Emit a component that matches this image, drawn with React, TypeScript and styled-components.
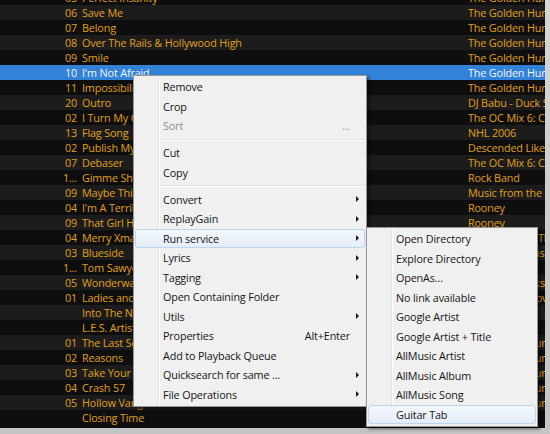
import styled, { createGlobalStyle } from "styled-components";

const GlobalStyle = createGlobalStyle`
  html, body {
    margin: 0;
    padding: 0;
    background: #000;
  }
  body {
    font-family: "Open Sans", "Noto Sans", sans-serif;
  }
`;

const Window = styled.div`
  position: relative;
  width: 550px;
  height: 434px;
  display: grid;
  grid-template-columns: 545px 5px;
  grid-template-rows: 428px 6px;
  background: linear-gradient(180deg, #d6d6d6, #c4c4c4);
  overflow: hidden;
`;

const Playlist = styled.div`
  background: #0e0e0e;
  overflow: hidden;
`;

const Rows = styled.div`
  margin-top: -10px;
`;

const Row = styled.div<{ $alt: boolean; $selected?: boolean }>`
  display: grid;
  grid-template-columns: 77px 381px 1fr;
  column-gap: 5px;
  height: 15px;
  line-height: 15px;
  font-size: 10.8px;
  font-weight: 500;
  letter-spacing: -0.15px;
  white-space: nowrap;
  color: ${({ $selected }) => ($selected ? "#f2f6fc" : "#e0a01a")};
  background: ${({ $alt, $selected }) =>
    $selected ? "#3282d8" : $alt ? "#1c1c1c" : "#0e0e0e"};
`;

const Cell = styled.div<{ $right?: boolean }>`
  overflow: hidden;
  text-align: ${({ $right }) => ($right ? "right" : "left")};
`;

const Menu = styled.div<{ $left: number; $top: number; $width: number }>`
  position: absolute;
  left: ${({ $left }) => $left}px;
  top: ${({ $top }) => $top}px;
  width: ${({ $width }) => $width}px;
  box-sizing: border-box;
  padding: 1px 1px 2px;
  background: #f0f0f0;
  border: 1px solid #979797;
  box-shadow: 2px 2px 3px rgba(0, 0, 0, 0.55);
  font-size: 10.8px;
  font-weight: 500;
  letter-spacing: -0.15px;
  color: #151515;

  &::before {
    content: "";
    position: absolute;
    top: 1px;
    bottom: 1px;
    left: 24px;
    width: 1px;
    background: #e2e3e3;
    border-right: 1px solid #ffffff;
  }
`;

const Item = styled.div<{ $hover?: boolean; $disabled?: boolean }>`
  position: relative;
  display: grid;
  grid-template-columns: 1fr auto 14px;
  align-items: center;
  height: 19.5px;
  box-sizing: border-box;
  padding-left: 28px;
  border-radius: 3px;
  border: 1px solid ${({ $hover }) => ($hover ? "#bcd4f0" : "transparent")};
  background: ${({ $hover }) =>
    $hover ? "linear-gradient(180deg, #f3f7fc 0%, #e4edf9 100%)" : "transparent"};
  color: ${({ $disabled }) => ($disabled ? "#8f8f8f" : "inherit")};
  white-space: nowrap;
  z-index: 1;
`;

const Label = styled.span`
  margin-left: -1px;
`;

const Shortcut = styled.span<{ $dim?: boolean }>`
  color: ${({ $dim }) => ($dim ? "#9a9a9a" : "inherit")};
`;

const Arrow = styled.span`
  justify-self: center;
  width: 0;
  height: 0;
  border-left: 3.5px solid #1a1a1a;
  border-top: 3.5px solid transparent;
  border-bottom: 3.5px solid transparent;
`;

const Separator = styled.div`
  position: relative;
  height: 7.5px;
  z-index: 1;

  &::after {
    content: "";
    position: absolute;
    left: 25px;
    right: 0;
    top: 3px;
    height: 1px;
    background: #e0e0e0;
    border-bottom: 1px solid #ffffff;
  }
`;

type Track = { num: string; title: string; album: string };

const tracks: Track[] = [
  { num: "05", title: "Perfect Insanity", album: "The Golden Hum" },
  { num: "06", title: "Save Me", album: "The Golden Hum" },
  { num: "07", title: "Belong", album: "The Golden Hum" },
  { num: "08", title: "Over The Rails & Hollywood High", album: "The Golden Hum" },
  { num: "09", title: "Smile", album: "The Golden Hum" },
  { num: "10", title: "I'm Not Afraid", album: "The Golden Hum" },
  { num: "11", title: "Impossibility", album: "The Golden Hum" },
  { num: "20", title: "Outro", album: "DJ Babu - Duck Season" },
  { num: "02", title: "I Turn My Camera On", album: "The OC Mix 6: Covering Our Tracks" },
  { num: "13", title: "Flag Song", album: "NHL 2006" },
  { num: "02", title: "Publish My Love", album: "Descended Like Vultures" },
  { num: "07", title: "Debaser", album: "The OC Mix 6: Covering Our Tracks" },
  { num: "1...", title: "Gimme Shelter", album: "Rock Band" },
  { num: "09", title: "Maybe This Time", album: "Music from the OC" },
  { num: "04", title: "I'm A Terrible Person", album: "Rooney" },
  { num: "09", title: "That Girl Has Love", album: "Rooney" },
  { num: "04", title: "Merry Xmas Everybody", album: "The OC Mix 5: The Christmas" },
  { num: "03", title: "Blueside", album: "Rooney - Bonus Tracks" },
  { num: "1...", title: "Tom Sawyer", album: "Rock Band" },
  { num: "05", title: "Wonderwall", album: "Stop The Clocks 1" },
  { num: "01", title: "Ladies and Gentlemen", album: "Live At The Grove" },
  { num: "", title: "Into The Night", album: "" },
  { num: "", title: "L.E.S. Artistes", album: "" },
  { num: "01", title: "The Last Song", album: "The Golden Hum" },
  { num: "02", title: "Reasons", album: "The Golden Hum" },
  { num: "03", title: "Take Your Time", album: "The Golden Hum" },
  { num: "04", title: "Crash 57", album: "The Golden Hum" },
  { num: "05", title: "Hollow Vanguard", album: "The Golden Hum" },
  { num: "", title: "Closing Time", album: "" },
];

type Entry =
  | { sep: true }
  | { sep?: false; label: string; sub?: boolean; hint?: string; disabled?: boolean; hover?: boolean };

const mainMenu: Entry[] = [
  { label: "Remove" },
  { label: "Crop" },
  { label: "Sort", hint: "...", disabled: true },
  { sep: true },
  { label: "Cut" },
  { label: "Copy" },
  { sep: true },
  { label: "Convert", sub: true },
  { label: "ReplayGain", sub: true },
  { label: "Run service", sub: true, hover: true },
  { label: "Lyrics", sub: true },
  { label: "Tagging", sub: true },
  { label: "Open Containing Folder" },
  { label: "Utils", sub: true },
  { label: "Properties", hint: "Alt+Enter" },
  { label: "Add to Playback Queue" },
  { label: "Quicksearch for same ...", sub: true },
  { label: "File Operations", sub: true },
];

const serviceMenu: Entry[] = [
  { label: "Open Directory" },
  { label: "Explore Directory" },
  { label: "OpenAs..." },
  { label: "No link available" },
  { label: "Google Artist" },
  { label: "Google Artist + Title" },
  { label: "AllMusic Artist" },
  { label: "AllMusic Album" },
  { label: "AllMusic Song" },
  { label: "Guitar Tab", hover: true },
];

const MenuEntries = ({ entries }: { entries: Entry[] }) => (
  <>
    {entries.map((e, i) =>
      e.sep ? (
        <Separator key={i} />
      ) : (
        <Item key={i} $hover={e.hover} $disabled={e.disabled}>
          <Label>{e.label}</Label>
          <Shortcut $dim={e.disabled}>{e.hint ?? ""}</Shortcut>
          {e.sub ? <Arrow /> : <span />}
        </Item>
      )
    )}
  </>
);

export default function App() {
  return (
    <>
      <GlobalStyle />
      <Window>
        <Playlist>
          <Rows>
            {tracks.map((t, i) => (
              <Row key={i} $alt={i % 2 === 1} $selected={i === 5}>
                <Cell $right>{t.num}</Cell>
                <Cell>{t.title}</Cell>
                <Cell>{t.album}</Cell>
              </Row>
            ))}
          </Rows>
        </Playlist>

        <Menu $left={133} $top={75} $width={234}>
          <MenuEntries entries={mainMenu} />
        </Menu>
        <Menu $left={366} $top={227} $width={172}>
          <MenuEntries entries={serviceMenu} />
        </Menu>
      </Window>
    </>
  );
}
